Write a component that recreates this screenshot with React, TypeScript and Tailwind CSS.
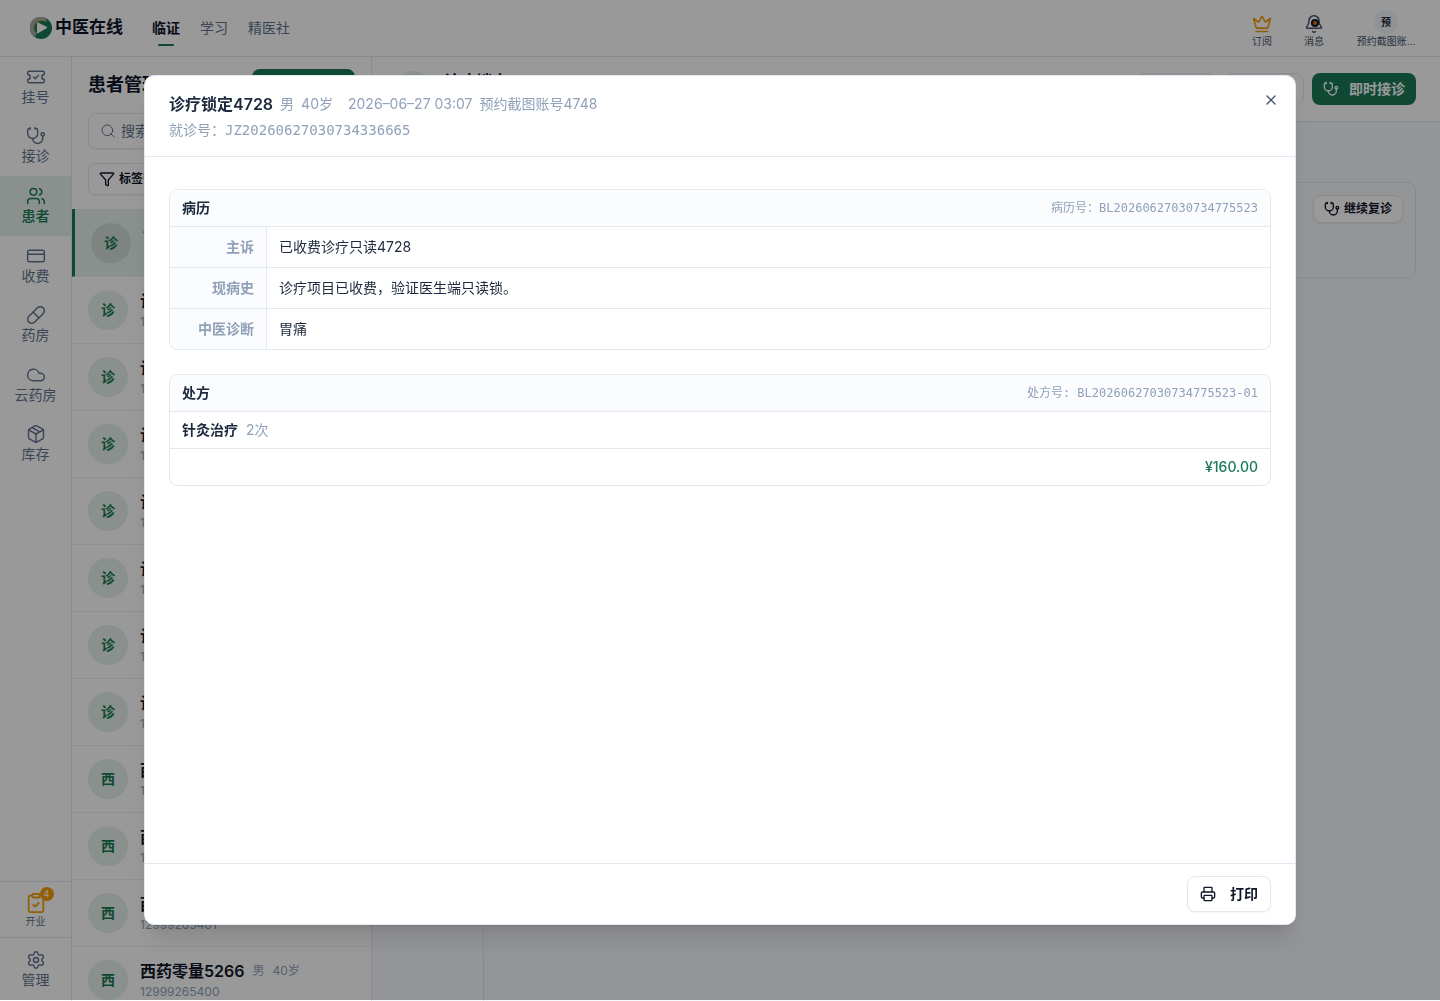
import type { ReactNode } from 'react'
import {
  Bell,
  ClipboardCheck,
  Cloud,
  CreditCard,
  Crown,
  Funnel,
  Package,
  Pill,
  Printer,
  Search,
  Settings,
  Stethoscope,
  TicketCheck,
  Users,
  X,
} from 'lucide-react'
import type { LucideIcon } from 'lucide-react'

interface NavItem {
  label: string
  icon: LucideIcon
  active?: boolean
}

interface Patient {
  name: string
  phone: string
  active?: boolean
}

const NAV_ITEMS: NavItem[] = [
  { label: '挂号', icon: TicketCheck },
  { label: '接诊', icon: Stethoscope },
  { label: '患者', icon: Users, active: true },
  { label: '收费', icon: CreditCard },
  { label: '药房', icon: Pill },
  { label: '云药房', icon: Cloud },
  { label: '库存', icon: Package },
]

const PATIENTS: Patient[] = [
  { name: '诊疗锁定4728', phone: '12999265411', active: true },
  { name: '诊疗锁定4727', phone: '12999265410' },
  { name: '诊疗锁定4726', phone: '12999265409' },
  { name: '诊疗锁定4725', phone: '12999265408' },
  { name: '诊疗锁定4724', phone: '12999265407' },
  { name: '诊疗锁定4723', phone: '12999265406' },
  { name: '诊疗锁定4722', phone: '12999265405' },
  { name: '诊疗锁定4721', phone: '12999265404' },
  { name: '西药零量5269', phone: '12999265403' },
  { name: '西药零量5268', phone: '12999265402' },
  { name: '西药零量5267', phone: '12999265401' },
  { name: '西药零量5266', phone: '12999265400' },
]

const RECORD_ROWS = [
  { label: '主诉', value: '已收费诊疗只读4728' },
  { label: '现病史', value: '诊疗项目已收费，验证医生端只读锁。' },
  { label: '中医诊断', value: '胃痛' },
]

function Logo() {
  return (
    <svg className="size-[22px]" viewBox="0 0 22 22" aria-hidden="true">
      <circle cx="11" cy="11" r="11" fill="#1a7a56" />
      <path d="M16.500 1.500A11 11 0 0 0 4.500 20L7 16.500A7 7 0 0 1 6 5.500Q10 2.500 16.500 4.500Z" fill="#a3aca6" />
      <path d="M4.500 12A7.500 7.500 0 0 1 15 4" fill="none" stroke="#c98a2b" strokeWidth="1.500" strokeDasharray="1.500 1.500" />
      <path d="M7.500 5.800L17 10.500L7.500 16Z" fill="#fff" stroke="#fff" strokeLinejoin="round" />
    </svg>
  )
}

function TopBar() {
  return (
    <header className="flex h-[57px] shrink-0 items-center border-b border-slate-200 bg-white pl-[30px] pr-6">
      <div className="flex items-center gap-[3px]">
        <Logo />
        <span className="text-[17px] font-semibold text-slate-900">中医在线</span>
      </div>
      <nav className="ml-[29px] flex h-full items-center gap-5 text-sm text-slate-500">
        <a href="#clinic" className="relative font-bold text-slate-900">
          临证
          <span className="absolute -bottom-2 left-1.5 h-0.5 w-4 rounded-full bg-[#1a7a56]" />
        </a>
        <a href="#study">学习</a>
        <a href="#club">精医社</a>
      </nav>
      <div className="ml-auto flex items-center pt-1.5 text-[10px] leading-[14px] text-slate-600">
        <button type="button" className="flex w-[52px] flex-col items-center">
          <Crown className="size-5 text-[#f59e0b]" />
          订阅
        </button>
        <button type="button" className="flex w-[52px] flex-col items-center">
          <span className="relative">
            <Bell className="size-5" strokeWidth={1.75} />
            <span className="absolute left-[7px] top-[5px] flex size-2 items-center justify-center rounded-full bg-slate-900">
              <span className="size-1 rounded-full bg-[#d97706]" />
            </span>
          </span>
          消息
        </button>
        <button type="button" className="ml-4 flex w-[60px] flex-col items-center">
          <span className="flex size-6 -translate-y-1 items-center justify-center rounded-full bg-slate-100 font-bold text-slate-800">预</span>
          <span className="-mt-1 whitespace-nowrap">预约截图账...</span>
        </button>
      </div>
    </header>
  )
}

function SideNav() {
  return (
    <aside className="flex w-[72px] shrink-0 flex-col border-r border-slate-200 bg-white text-sm text-slate-500">
      <nav className="flex h-[417px] flex-col">
        {NAV_ITEMS.map(({ label, icon: Icon, active }) => (
          <a
            key={label}
            href="#nav"
            className={`flex flex-1 flex-col items-center justify-center ${active ? 'bg-[#e4f0eb] font-medium text-[#1a7a56]' : ''}`}
          >
            <Icon className="size-5" strokeWidth={1.75} />
            <span>{label}</span>
          </a>
        ))}
      </nav>
      <a href="#opening" className="mt-auto flex h-14 flex-col items-center justify-center border-t border-slate-200 text-[10px] leading-[14px]">
        <span className="relative">
          <ClipboardCheck className="size-[22px] text-[#f59e0b]" />
          <span className="absolute -right-[7px] -top-[5px] flex size-3.5 items-center justify-center rounded-full bg-[#f59e0b] text-[9px] text-white">4</span>
        </span>
        开业
      </a>
      <a href="#manage" className="flex h-16 flex-col items-center justify-center border-t border-slate-200">
        <Settings className="size-5" strokeWidth={1.75} />
        管理
      </a>
    </aside>
  )
}

function PatientList() {
  return (
    <section className="flex w-[300px] shrink-0 flex-col border-r border-slate-200 bg-white">
      <div className="flex h-[152px] shrink-0 flex-col px-4 pt-3">
        <div className="flex items-center justify-between">
          <h1 className="text-lg font-bold text-slate-900">患者管理</h1>
          <button type="button" className="h-8 w-[103px] rounded-lg bg-[#1a7a56] text-sm font-bold text-white">
            新建患者
          </button>
        </div>
        <label className="mt-3 flex h-9 shrink-0 items-center gap-[5px] rounded-lg border border-slate-200 px-[11px] shadow-xs">
          <Search className="size-4 shrink-0 text-slate-500" strokeWidth={1.5} />
          <input type="search" placeholder="搜索姓名、手机号" className="min-w-0 flex-1 text-sm outline-none placeholder:text-slate-500" />
        </label>
        <button type="button" className="mt-3.5 flex h-8 shrink-0 items-center gap-1 self-start rounded-lg border border-slate-200 px-2.5 text-xs font-semibold text-slate-900 shadow-xs">
          <Funnel className="size-4" />
          标签筛选
        </button>
      </div>
      <ul>
        {PATIENTS.map((patient) => (
          <li
            key={patient.name}
            className={`flex h-[67px] items-center gap-3 border-b border-[#edf1f3] px-4 first:h-[68px] ${patient.active ? 'border-l-3 border-l-[#1a7a56] bg-[#e4f0eb]' : ''}`}
          >
            <span className={`flex size-10 shrink-0 items-center justify-center rounded-full text-sm font-semibold text-[#1a7a56] ${patient.active ? 'bg-[#d0dcd8]' : 'bg-[#e4f0eb]'}`}>
              {patient.name.charAt(0)}
            </span>
            <div>
              <div className="flex items-center gap-2 whitespace-nowrap text-base leading-6">
                <span className="font-semibold text-slate-900">{patient.name}</span>
                <span className="text-xs text-slate-400">男</span>
                <span className="text-xs text-slate-400">40岁</span>
              </div>
              <div className="text-xs leading-[18px] text-slate-400">{patient.phone}</div>
            </div>
          </li>
        ))}
      </ul>
    </section>
  )
}

function PatientDetail() {
  return (
    <main className="flex min-w-0 flex-1 flex-col bg-[#f7f8fb]">
      <div className="flex h-[65px] shrink-0 items-center gap-2 border-b border-slate-200 bg-white px-6">
        <span className="mr-1 flex size-9 items-center justify-center rounded-full bg-[#e4f0eb] text-sm font-bold text-[#1a7a56]">诊</span>
        <div className="mr-auto">
          <div className="flex items-center gap-2 leading-5">
            <span className="font-semibold text-slate-900">诊疗锁定4728</span>
            <span className="text-xs text-slate-400">男</span>
          </div>
          <div className="text-xs leading-4 text-slate-400">12999265411</div>
        </div>
        <button type="button" className="h-8 w-20 rounded-lg border border-slate-200 text-sm font-medium">编辑</button>
        <button type="button" className="h-8 w-20 rounded-lg border border-slate-200 text-sm font-medium">预约</button>
        <button type="button" className="flex h-8 w-[104px] items-center justify-between rounded-lg bg-[#1a7a56] px-[11px] text-sm font-bold text-white">
          <Stethoscope className="size-4" />
          即时接诊
        </button>
      </div>
      <div className="flex flex-1">
        <div className="w-28 shrink-0 border-r border-slate-200" />
        <div className="flex-1 px-6 pt-[60px]">
          <div className="flex h-24 items-start justify-end rounded-lg border border-slate-200 p-3">
            <button type="button" className="flex h-7 items-center gap-1 rounded-lg border border-slate-200 bg-white px-2.5 text-xs font-bold text-slate-900 shadow-xs">
              <Stethoscope className="size-4" />
              继续复诊
            </button>
          </div>
        </div>
      </div>
    </main>
  )
}

function SectionCard({ title, number, children }: { title: string; number: ReactNode; children: ReactNode }) {
  return (
    <section className="overflow-hidden rounded-lg border border-slate-200">
      <div className="flex h-[37px] items-center justify-between border-b border-slate-200 bg-[#fafcfe] px-3">
        <h3 className="text-sm font-semibold">{title}</h3>
        <span className="text-xs text-slate-400">{number}</span>
      </div>
      {children}
    </section>
  )
}

function RecordDialog() {
  return (
    <div className="fixed inset-x-0 bottom-px top-0 flex items-center justify-center bg-black/40">
      <div
        role="dialog"
        aria-modal="true"
        aria-labelledby="record-title"
        className="flex h-[85%] w-4/5 flex-col rounded-[10px] border border-slate-200 bg-white text-slate-800 shadow-xl"
      >
        <div className="flex h-[81px] shrink-0 items-start justify-between border-b border-slate-200 px-6 pt-4">
          <div className="text-sm text-slate-400">
            <div className="flex items-center gap-[7px]">
              <h2 id="record-title" className="text-base font-semibold text-slate-800">诊疗锁定4728</h2>
              <span>男</span>
              <span>40岁</span>
              <span className="ml-2">2026–06–27 03:07</span>
              <span>预约截图账号4748</span>
            </div>
            <div className="mt-1">
              就诊号：<span className="font-['DejaVu_Sans_Mono',monospace]">JZ20260627030734336665</span>
            </div>
          </div>
          <button type="button" aria-label="关闭" className="-mr-4 -mt-2 flex size-8 items-center justify-center text-slate-600">
            <X className="size-4" />
          </button>
        </div>

        <div className="flex flex-1 flex-col gap-6 overflow-auto px-6 py-8">
          <SectionCard
            title="病历"
            number={<>病历号：<span className="font-['DejaVu_Sans_Mono',monospace]">BL20260627030734775523</span></>}
          >
            <table className="w-full border-separate border-spacing-0 text-sm">
              <tbody>
                {RECORD_ROWS.map((row) => (
                  <tr key={row.label} className="group">
                    <th scope="row" className="h-[41px] w-[97px] border-b border-r border-slate-200 bg-[#fafcfe] pr-3 text-right font-semibold text-slate-400 group-last:h-10 group-last:border-b-0">
                      {row.label}
                    </th>
                    <td className="border-b border-slate-200 px-3 group-last:border-b-0">{row.value}</td>
                  </tr>
                ))}
              </tbody>
            </table>
          </SectionCard>

          <SectionCard
            title="处方"
            number={<span className="font-['DejaVu_Sans_Mono','Noto_Sans_CJK_SC',monospace]">处方号: BL20260627030734775523-01</span>}
          >
            <div className="flex h-[37px] items-center gap-2 border-b border-slate-200 px-3 text-sm">
              <span className="font-semibold">针灸治疗</span>
              <span className="text-slate-400">2次</span>
            </div>
            <div className="flex h-9 items-center justify-end px-3 text-sm font-medium text-[#1a7a56]">¥160.00</div>
          </SectionCard>
        </div>

        <div className="flex h-[61px] shrink-0 items-center justify-end border-t border-slate-200 px-6">
          <button type="button" className="flex h-9 w-[84px] items-center justify-between rounded-lg border border-slate-200 px-3 text-sm font-semibold text-slate-900 shadow-xs">
            <Printer className="size-4" />
            打印
          </button>
        </div>
      </div>
    </div>
  )
}

export default function App() {
  return (
    <div className="flex h-screen flex-col overflow-hidden font-['Inter','Noto_Sans_CJK_SC',sans-serif]">
      <TopBar />
      <div className="flex min-h-0 flex-1">
        <SideNav />
        <PatientList />
        <PatientDetail />
      </div>
      <RecordDialog />
    </div>
  )
}
